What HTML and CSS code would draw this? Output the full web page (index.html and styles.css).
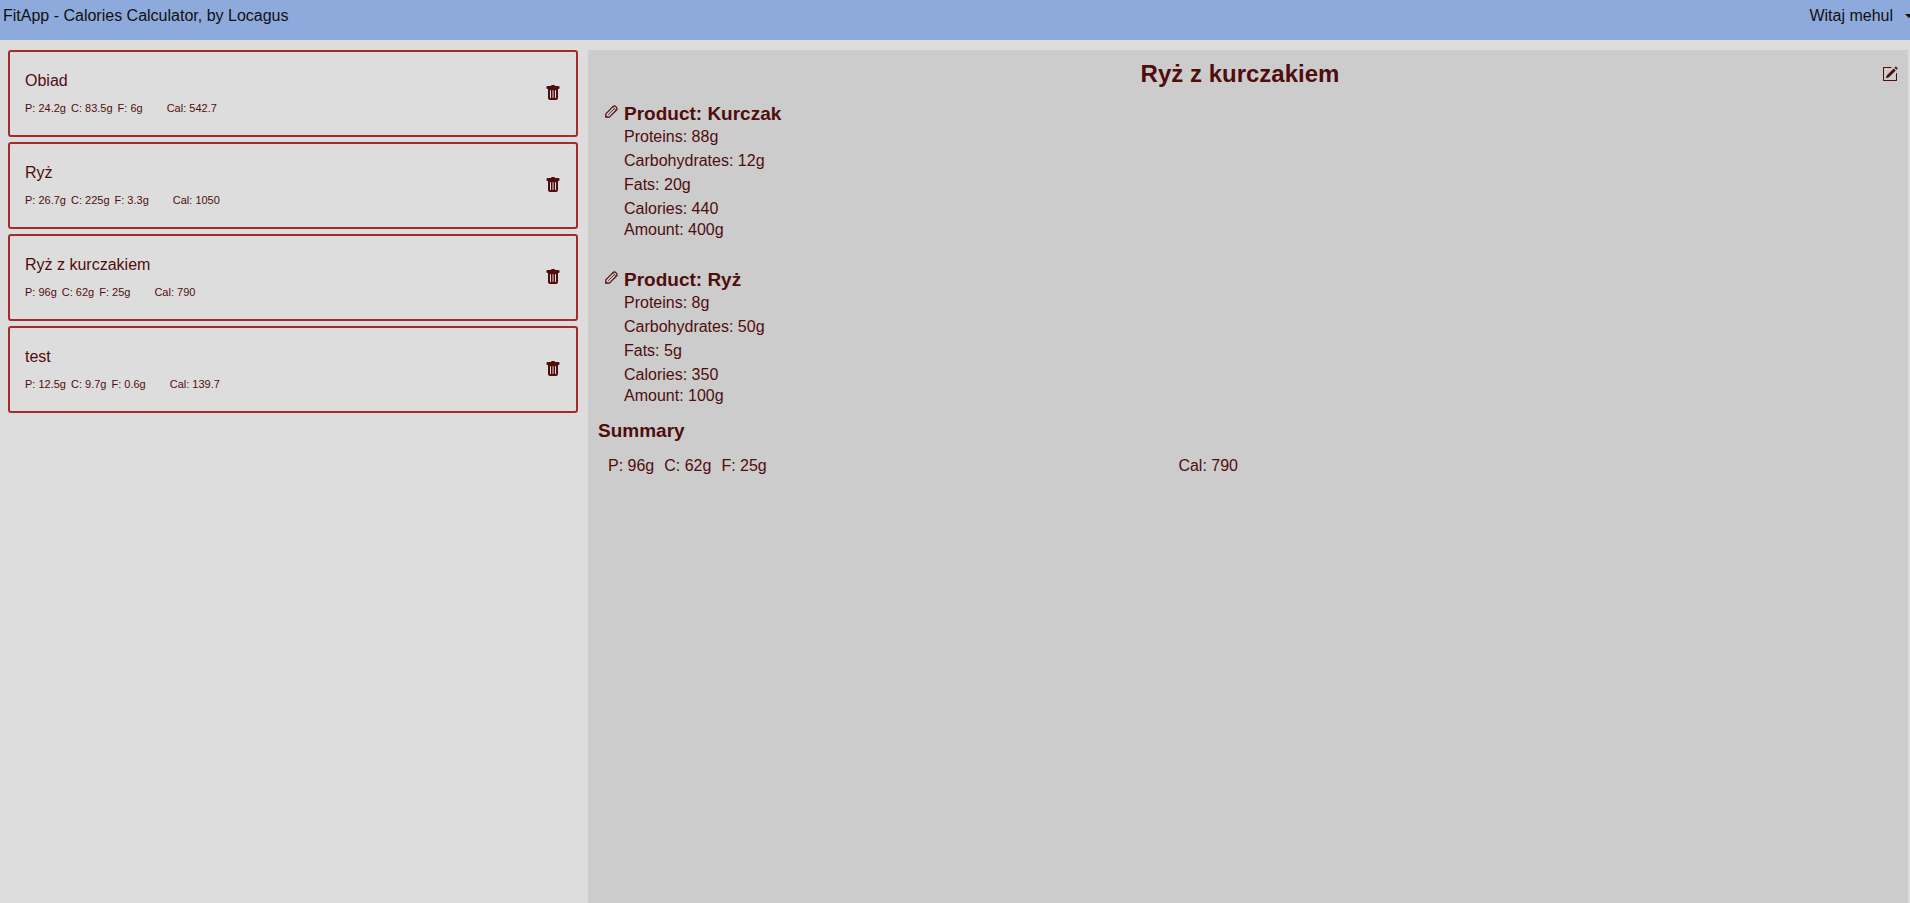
FILE: index.html
```html
<!DOCTYPE html>
<html lang="pl">
<head>
<meta charset="utf-8">
<title>FitApp</title>
<link rel="stylesheet" href="styles.css">
</head>
<body>
<svg class="sprite" aria-hidden="true">
  <symbol id="trash" viewBox="0 0 16 16"><path fill="currentColor" d="M2.5 1a1 1 0 0 0-1 1v1a1 1 0 0 0 1 1H3v9a2 2 0 0 0 2 2h6a2 2 0 0 0 2-2V4h.5a1 1 0 0 0 1-1V2a1 1 0 0 0-1-1H10a1 1 0 0 0-1-1H7a1 1 0 0 0-1 1zm3 4a.5.5 0 0 1 .5.5v7a.5.5 0 0 1-1 0v-7a.5.5 0 0 1 .5-.5M8 5a.5.5 0 0 1 .5.5v7a.5.5 0 0 1-1 0v-7A.5.5 0 0 1 8 5m3 .5v7a.5.5 0 0 1-1 0v-7a.5.5 0 0 1 1 0"/></symbol>
  <symbol id="pencil" viewBox="0 0 13 13"><g fill="none" stroke="currentColor"><path stroke-width="1.2" stroke-linejoin="round" d="M.8 12.200v-3.400l7.600-7.600q1.300-1 2.700.7t.9 2.600l-7.600 7.700z"/><path stroke-width=".8" d="M3.200 9.800l6-6M7.700 2l3.300 3.300"/></g><path fill="currentColor" d="M.8 12.200v-2l2 2z"/></symbol>
  <symbol id="edit" viewBox="0 0 16 16"><path fill="currentColor" d="M15.502 1.94a.5.5 0 0 1 0 .706L14.459 3.69l-2-2L13.502.646a.5.5 0 0 1 .707 0l1.293 1.293zm-1.75 2.456-2-2L4.939 9.21a.5.5 0 0 0-.121.196l-.805 2.414a.25.25 0 0 0 .316.316l2.414-.805a.5.5 0 0 0 .196-.12z"/><path fill="currentColor" d="M1 14.500a.5.5 0 0 0 .5.5h13a.5.5 0 0 0 .5-.5v-7a.5.5 0 0 0-1 0V14H2V2h7a.5.5 0 0 0 0-1H1.500a.5.5 0 0 0-.5.5z"/></symbol>
</svg>
<header class="nav">
  <span>FitApp - Calories Calculator, by Locagus</span>
  <button class="user" type="button">Witaj mehul
    <svg class="caret" viewBox="0 0 8 4" aria-hidden="true"><path fill="currentColor" d="M0 0h8L4 4z"/></svg>
  </button>
</header>
<main class="layout">
  <ul class="meals">
    <li class="meal">
      <div><p class="name">Obiad</p><p class="macros"><span>P: 24.2g</span><span>C: 83.5g</span><span>F: 6g</span><span class="cal">Cal: 542.7</span></p></div>
      <button class="delete" type="button" aria-label="Delete Obiad"><svg class="icon"><use href="#trash"/></svg></button>
    </li>
    <li class="meal">
      <div><p class="name">Ryż</p><p class="macros"><span>P: 26.7g</span><span>C: 225g</span><span>F: 3.3g</span><span class="cal">Cal: 1050</span></p></div>
      <button class="delete" type="button" aria-label="Delete Ryż"><svg class="icon"><use href="#trash"/></svg></button>
    </li>
    <li class="meal">
      <div><p class="name">Ryż z kurczakiem</p><p class="macros"><span>P: 96g</span><span>C: 62g</span><span>F: 25g</span><span class="cal">Cal: 790</span></p></div>
      <button class="delete" type="button" aria-label="Delete Ryż z kurczakiem"><svg class="icon"><use href="#trash"/></svg></button>
    </li>
    <li class="meal">
      <div><p class="name">test</p><p class="macros"><span>P: 12.5g</span><span>C: 9.7g</span><span>F: 0.6g</span><span class="cal">Cal: 139.7</span></p></div>
      <button class="delete" type="button" aria-label="Delete test"><svg class="icon"><use href="#trash"/></svg></button>
    </li>
  </ul>
  <section class="details">
    <div class="heading">
      <h1>Ryż z kurczakiem</h1>
      <button type="button" aria-label="Edit meal"><svg class="icon"><use href="#edit"/></svg></button>
    </div>
    <article class="product">
      <button type="button" aria-label="Edit Kurczak"><svg class="pencil"><use href="#pencil"/></svg></button>
      <div>
        <h2>Product: Kurczak</h2>
        <ul class="values"><li>Proteins: 88g</li><li>Carbohydrates: 12g</li><li>Fats: 20g</li><li>Calories: 440</li></ul>
        <p>Amount: 400g</p>
      </div>
    </article>
    <article class="product">
      <button type="button" aria-label="Edit Ryż"><svg class="pencil"><use href="#pencil"/></svg></button>
      <div>
        <h2>Product: Ryż</h2>
        <ul class="values"><li>Proteins: 8g</li><li>Carbohydrates: 50g</li><li>Fats: 5g</li><li>Calories: 350</li></ul>
        <p>Amount: 100g</p>
      </div>
    </article>
    <h2>Summary</h2>
    <div class="summary">
      <p class="totals"><span>P: 96g</span><span>C: 62g</span><span>F: 25g</span></p>
      <p>Cal: 790</p>
    </div>
  </section>
</main>
</body>
</html>
```
FILE: styles.css
```css
* { box-sizing: border-box; margin: 0; padding: 0; }
body {
  display: flex;
  flex-direction: column;
  min-height: 100vh;
  overflow-x: hidden;
  background: #ddd;
  color: #500d0d;
  font: 16px/18px Arial, "Liberation Sans", sans-serif;
}
ul { list-style: none; }
button { display: block; border: 0; background: none; color: inherit; font: inherit; cursor: pointer; }
svg { display: block; }
h2 { font-size: 19px; line-height: 22px; }
.sprite { display: none; }
.icon { width: 16px; height: 16px; }
.nav {
  display: flex;
  justify-content: space-between;
  padding: 7px 0 15px 3px;
  background: #8ea9db;
  color: #111;
}
.user { display: flex; align-items: center; gap: 12px; margin-right: -3px; }
.caret { width: 8px; height: 4px; }
.layout {
  flex: 1;
  display: grid;
  grid-template-columns: 30% 1fr;
  gap: 10px;
  padding: 10px 2px 0 8px;
}
.meals { display: flex; flex-direction: column; gap: 5px; }
.meal {
  display: flex;
  align-items: center;
  justify-content: space-between;
  padding: 20px 15px;
  border: 2px solid #a52a2a;
  border-radius: 3px;
}
.delete { padding-bottom: 1px; }
.name { margin-bottom: 12px; }
.macros { display: flex; gap: 5px; font-size: 11px; line-height: 13px; }
.cal { margin-left: 19px; }
.details { padding: 10px; background: #ccc; }
.heading { display: flex; align-items: center; }
.heading h1 { flex: 1; font-size: 24px; line-height: 28px; text-align: center; }
.product { display: flex; align-items: flex-start; gap: 6px; padding: 15px 7px; }
.pencil { width: 13px; height: 13px; margin-top: 2px; }
.values li { padding: 3px 0; }
.summary { display: flex; justify-content: space-between; width: 50%; padding: 15px 10px; }
.totals { display: flex; gap: 10px; }
```
